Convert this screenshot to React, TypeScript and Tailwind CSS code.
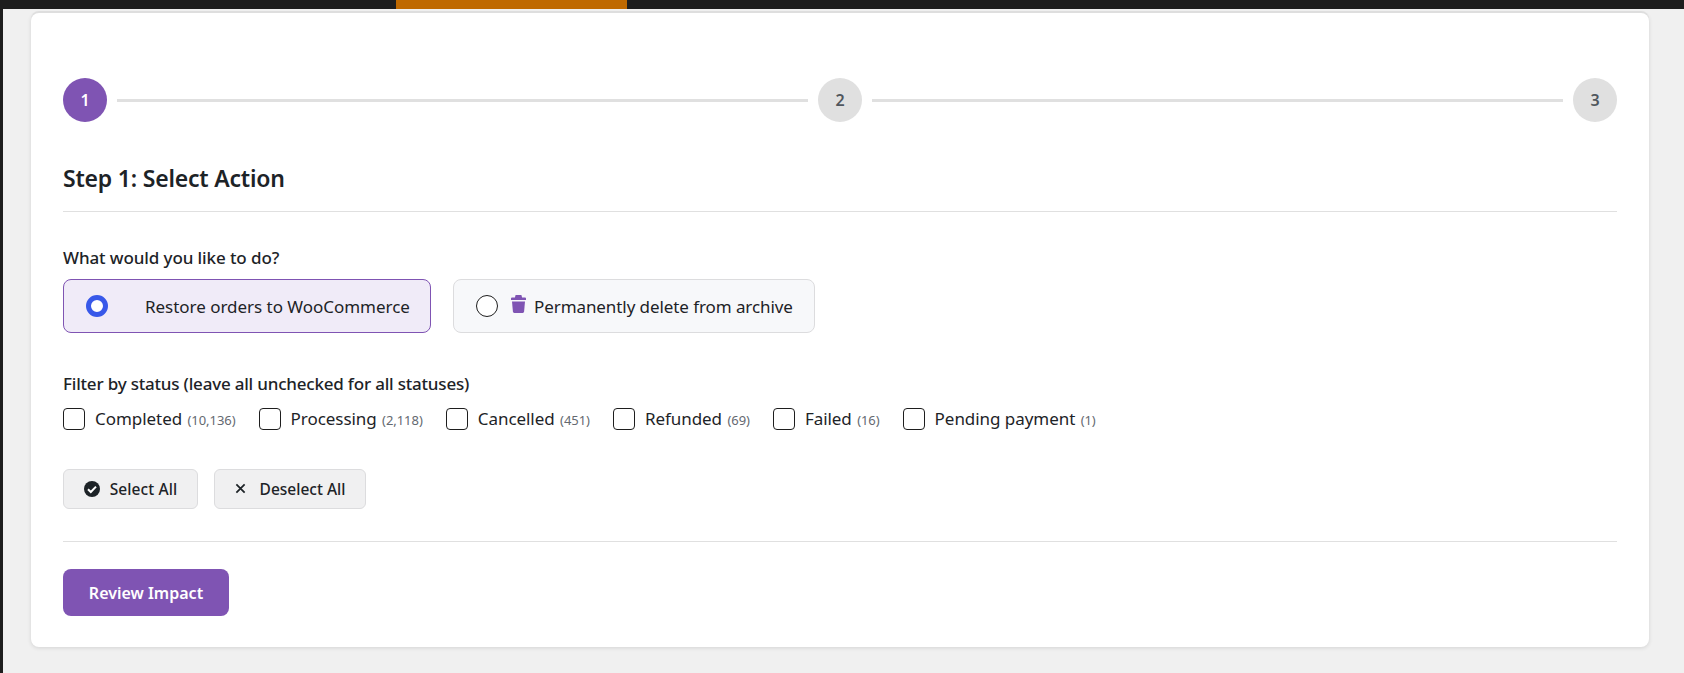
function Check() {
  return <span className="w-[22px] h-[22px] rounded-[4px] border border-[#1e1e1e] bg-white shrink-0" />;
}

const statuses: [string, string][] = [
  ['Completed', '(10,136)'],
  ['Processing', '(2,118)'],
  ['Cancelled', '(451)'],
  ['Refunded', '(69)'],
  ['Failed', '(16)'],
  ['Pending payment', '(1)'],
];

export default function App() {
  return (
    <div className="w-[1684px] h-[673px] overflow-hidden bg-[#f0f0f0] text-[#1d2327] flex flex-col font-['Noto_Sans','Open_Sans',sans-serif]">
      <div className="h-[9px] shrink-0 bg-[#1e1e1e] flex">
        <div className="w-[396px]" />
        <div className="w-[231px] bg-[#bf6900]" />
      </div>
      <div className="flex-1 flex min-h-0">
        <div className="w-[3px] bg-[#1e1e1e] shrink-0" />
        <div className="flex-1 pl-[28px] pr-[35px] pt-[4px]">
          <div className="h-[634px] bg-white rounded-[8px] shadow-[0_-2px_0_#dedede,0_1px_4px_rgba(0,0,0,0.12)] px-[32px] pt-[65px]">
            <div className="flex items-center gap-[10px] h-[44px]">
              <div className="w-[44px] h-[44px] rounded-full bg-[#7f54b3] text-white text-[16px] font-semibold flex items-center justify-center">1</div>
              <div className="flex-1 h-[3px] bg-[#e0e0e0]" />
              <div className="w-[44px] h-[44px] rounded-full bg-[#e0e0e0] text-[#50575e] text-[16px] font-semibold flex items-center justify-center">2</div>
              <div className="flex-1 h-[3px] bg-[#e0e0e0]" />
              <div className="w-[44px] h-[44px] rounded-full bg-[#e0e0e0] text-[#50575e] text-[16px] font-semibold flex items-center justify-center">3</div>
            </div>
            <h2 className="mt-[41px] h-[49px] border-b border-[#e0e0e0] text-[23px] leading-[30px] font-semibold tracking-[-0.2px]">Step 1: Select Action</h2>
            <div className="mt-[34px] text-[17px] leading-[24px] font-medium tracking-[-0.1px]">What would you like to do?</div>
            <div className="mt-[9px] flex gap-[22px]">
              <div className="w-[368px] h-[54px] rounded-[8px] border border-[#7f54b3] bg-[#f0ebf8] flex items-center pl-[22px]">
                <span className="w-[22px] h-[22px] rounded-full border-[5.5px] border-[#3858e9] bg-white shrink-0" />
                <span className="ml-[37px] pt-[2px] text-[17px] tracking-[-0.03px] whitespace-nowrap">Restore orders to WooCommerce</span>
              </div>
              <div className="w-[362px] h-[54px] rounded-[8px] border border-[#dcdcde] bg-[#f7f8fa] flex items-center pl-[22px]">
                <span className="w-[22px] h-[22px] rounded-full border border-[#1e1e1e] bg-white shrink-0" />
                <svg viewBox="0 0 15 18" className="ml-[13px] w-[15px] h-[18px] -mt-[4px] shrink-0" fill="#7f54b3">
                  <path d="M4.6 0h5.8l.7 2.4H14a1 1 0 0 1 1 1V5H0V3.4a1 1 0 0 1 1-1h2.9z" />
                  <path d="M1 6.4h13l-.9 10.2c-.1.9-.6 1.4-1.4 1.4H3.3c-.8 0-1.3-.5-1.4-1.4z" />
                </svg>
                <span className="ml-[8px] pt-[2px] text-[17px] tracking-[-0.08px] whitespace-nowrap">Permanently delete from archive</span>
              </div>
            </div>
            <div className="mt-[39px] text-[17px] leading-[24px] font-medium tracking-[-0.2px]">Filter by status (leave all unchecked for all statuses)</div>
            <div className="mt-[11px] flex gap-[23px] h-[24px] items-center">
              {statuses.map(([n, c]) => (
                <label key={n} className="flex items-center gap-[10px] whitespace-nowrap">
                  <Check />
                  <span className="text-[17px] tracking-[-0.05px]">{n} <span className="ml-[1px] text-[13px] text-[#646970]">{c}</span></span>
                </label>
              ))}
            </div>
            <div className="mt-[38px] flex gap-[16px]">
              <button className="w-[135px] h-[40px] pt-[2px] rounded-[6px] border border-[#dcdcde] bg-[#f0f0f1] flex items-center justify-center gap-[10px] text-[15.5px] font-medium tracking-[0.1px]">
                <svg viewBox="0 0 16 16" className="w-[16px] h-[16px] -mt-[3px]">
                  <circle cx="8" cy="8" r="8" fill="#1d2327" />
                  <path d="M4 8.2l2.8 2.8L12 5.6" fill="none" stroke="#fff" strokeWidth="2" />
                </svg>
                Select All
              </button>
              <button className="w-[152px] h-[40px] pt-[2px] rounded-[6px] border border-[#dcdcde] bg-[#f0f0f1] flex items-center justify-center gap-[14px] text-[15.5px] font-medium">
                <svg viewBox="0 0 12 12" className="w-[11px] h-[11px] -mt-[3px]">
                  <path d="M1.5 1.5l9 9M10.5 1.5l-9 9" stroke="#1d2327" strokeWidth="1.9" fill="none" />
                </svg>
                Deselect All
              </button>
            </div>
            <div className="mt-[32px] border-t border-[#e0e0e0]" />
            <button className="mt-[27px] w-[166px] h-[47px] rounded-[8px] bg-[#7f54b3] text-white text-[16px] font-semibold">Review Impact</button>
          </div>
        </div>
      </div>
    </div>
  );
}
